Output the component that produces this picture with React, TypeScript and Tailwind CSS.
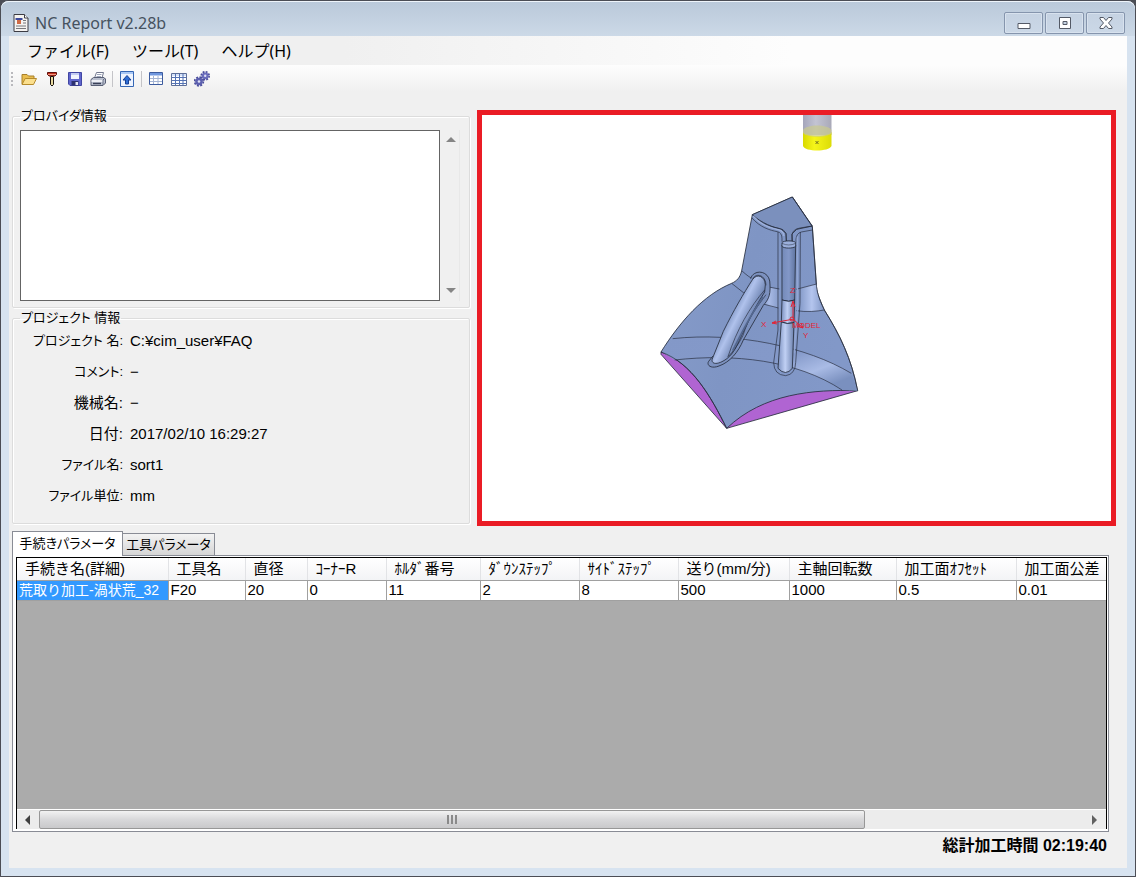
import type { ReactNode } from "react";

const columns = [
  { name: "手続き名(詳細)", value: "荒取り加工-渦状荒_32", width: "w-[151px]" },
  { name: "工具名", value: "F20", width: "w-[77px]" },
  { name: "直径", value: "20", width: "w-[62px]" },
  { name: "ｺｰﾅｰR", value: "0", width: "w-[79px]" },
  { name: "ﾎﾙﾀﾞ番号", value: "11", width: "w-[94px]" },
  { name: "ﾀﾞｳﾝｽﾃｯﾌﾟ", value: "2", width: "w-[99px]" },
  { name: "ｻｲﾄﾞｽﾃｯﾌﾟ", value: "8", width: "w-[99px]" },
  { name: "送り(mm/分)", value: "500", width: "w-[111px]" },
  { name: "主軸回転数", value: "1000", width: "w-[107px]" },
  { name: "加工面ｵﾌｾｯﾄ", value: "0.5", width: "w-[120px]" },
  { name: "加工面公差", value: "0.01", width: "" },
];

const info = [
  { label: "プロジェクト 名:", value: "C:¥cim_user¥FAQ", size: "text-[13px]" },
  { label: "コメント:", value: "−", size: "text-[13px]" },
  { label: "機械名:", value: "−", size: "text-[15px]" },
  { label: "日付:", value: "2017/02/10 16:29:27", size: "text-[15px]" },
  { label: "ファイル名:", value: "sort1", size: "text-[13px]" },
  { label: "ファイル単位:", value: "mm", size: "text-[13px]" },
];

function Icon({ children }: { children: ReactNode }) {
  return (
    <svg width="16" height="16" viewBox="0 0 16 16" aria-hidden="true">
      {children}
    </svg>
  );
}

function AppIcon() {
  return (
    <svg width="16" height="18" viewBox="0 0 16 18" aria-hidden="true">
      <path d="M1 .5h10.500l3.500 3.500v13.500H1z" fill="#f5f3f1" stroke="#3c3c44" />
      <path d="M11.500.500V4H15" fill="#fff" stroke="#3c3c44" />
      <path d="M2.500 4h7v2h-7z" fill="#3d4a9c" />
      <path d="M4 6h4v4H4z" fill="#d06a45" />
      <path d="M10 6.500h3M10 9h3M3 12h10M3 14.500h10" stroke="#77777b" />
    </svg>
  );
}

const FolderIcon = () => (
  <Icon>
    <path d="M1 13V3.500h5L7.500 5H13v3" fill="#e9bd4e" stroke="#a8802a" />
    <path d="M1 13.500 4.200 7.500H15.500L12.500 13.500Z" fill="#fbdf8d" stroke="#b58a2c" />
  </Icon>
);
const DrillIcon = () => (
  <Icon>
    <path d="M3.500 1.500h9v2l-1.500 1.500H5L3.500 3.500z" fill="#c8321f" stroke="#5d0f0a" />
    <path d="M4 3.500h8" stroke="#f09a80" />
    <path d="M6.500 5.500h3v8L8 15l-1.500-1.500z" fill="#e8d9a0" stroke="#16100c" />
  </Icon>
);
const SaveIcon = () => (
  <Icon>
    <path d="M1.500 1.500h13v13H3l-1.500-1.500z" fill="#6066cc" stroke="#4146a3" />
    <path d="M4 2h8v6H4z" fill="#f1f4fd" />
    <path d="M4 2h8v2H4z" fill="#c3ccf2" />
    <path d="M4.500 10h7v4.500h-7z" fill="#2c3170" />
    <path d="M8.500 11h2.500v3H8.500z" fill="#e7e8f5" />
  </Icon>
);
const PrintIcon = () => (
  <Icon>
    <path d="M4.500 7 6.500 1.500h7L12 7z" fill="#fff" stroke="#72788e" />
    <path d="M7 3.500h4.500M6.500 5.500H11" stroke="#9da5ba" />
    <path d="M1 8.500 3.500 6.500H14l1.500 1.500v4L13 14.500H1z" fill="#b9bfce" stroke="#585f75" />
    <path d="M1.500 9H13v2H1.500z" fill="#eef0f6" />
    <path d="M3 12.500h8" stroke="#3a4057" strokeWidth="1.500" />
    <path d="M13 9v5M13 9l2-2" stroke="#6b7288" />
  </Icon>
);
const UpIcon = () => (
  <Icon>
    <path d="M1.500 .500h13v15h-13z" fill="#eef4ff" stroke="#3567b5" />
    <path d="M2 1h12v2H2z" fill="#a9c8f5" />
    <path d="M8 4.500 12 9H9.500v4h-3V9H4z" fill="#2f6fd6" stroke="#163f94" />
  </Icon>
);
const GridIcon = () => (
  <Icon>
    <path d="M1.500 1.500h13v12h-13z" fill="#fff" stroke="#3c5b9e" />
    <path d="M2 2h12v2.500H2z" fill="#6f97de" />
    <path d="M2 7.500h12M2 10.500h12M5.500 5v8M10 5v8" stroke="#a4b4d4" />
  </Icon>
);
const SheetIcon = () => (
  <Icon>
    <path d="M.500 2.500h15v12H.500z" fill="#fff" stroke="#5e6f98" />
    <path d="M1 3h14v2H1z" fill="#d6e2f7" />
    <path d="M1 6.500h14M1 9.500h14M1 12.500h14M4.500 3v11M8.500 3v11M12 3v11" stroke="#5573b4" />
  </Icon>
);
const GearsIcon = () => (
  <Icon>
    <circle cx="5" cy="10.500" r="3.800" fill="#5d60b0" />
    <circle cx="5" cy="10.500" r="4.400" fill="none" stroke="#494c9c" strokeWidth="1.600" strokeDasharray="2 1.450" />
    <circle cx="5" cy="10.500" r="1.300" fill="#dfe1f5" />
    <circle cx="11.200" cy="4.800" r="3.400" fill="#6a6dbd" />
    <circle cx="11.200" cy="4.800" r="4" fill="none" stroke="#494c9c" strokeWidth="1.600" strokeDasharray="1.900 1.240" />
    <circle cx="11.200" cy="4.800" r="1.200" fill="#dfe1f5" />
  </Icon>
);

function ToolButton({ label, children }: { label: string; children: ReactNode }) {
  return (
    <button type="button" aria-label={label} className="flex h-6 w-[23px] items-center justify-center">
      {children}
    </button>
  );
}

function Separator() {
  return (
    <div className="flex w-[6px] justify-center">
      <div className="h-4 w-px bg-[#c4c4c8]" />
    </div>
  );
}

function CaptionButton({ label, children }: { label: string; children: ReactNode }) {
  return (
    <button
      type="button"
      aria-label={label}
      className="flex h-[22px] w-[39px] items-center justify-center rounded-xs border border-[#8595ad] bg-linear-to-b from-[#c5d2e2] to-[#cbd8e7] shadow-[inset_0_0_0_1px_#d8e2ee]"
    >
      {children}
    </button>
  );
}

function ModelView() {
  return (
    <svg
      viewBox="482 115 629 406"
      preserveAspectRatio="xMidYMin meet"
      className="h-full w-full"
      role="img"
      aria-label="MODEL"
    >
      <defs>
        <linearGradient id="holder" x1="0" x2="1" y1="0" y2="0">
          <stop offset="0" stopColor="#a5a6bb" />
          <stop offset=".45" stopColor="#c3c4d3" />
          <stop offset="1" stopColor="#a9a9b8" />
        </linearGradient>
        <linearGradient id="cutter" x1="0" x2="1" y1="0" y2="0">
          <stop offset="0" stopColor="#d9d900" />
          <stop offset=".4" stopColor="#f5f51a" />
          <stop offset="1" stopColor="#dcdc08" />
        </linearGradient>
        <linearGradient id="body" x1="0" x2="1" y1="0" y2="0.3">
          <stop offset="0" stopColor="#879cca" />
          <stop offset=".5" stopColor="#7f95c4" />
          <stop offset="1" stopColor="#8298c8" />
        </linearGradient>
        <linearGradient id="rod" x1="0" x2="1" y1="0" y2="0">
          <stop offset="0" stopColor="#7389b8" />
          <stop offset=".5" stopColor="#8398c8" />
          <stop offset="1" stopColor="#5f749f" />
        </linearGradient>
        <linearGradient id="rodLight" x1="0" x2="1" y1="0" y2="0">
          <stop offset="0" stopColor="#7b90bf" />
          <stop offset=".45" stopColor="#c0d0f4" />
          <stop offset="1" stopColor="#6c81ae" />
        </linearGradient>
        <linearGradient id="rib" gradientUnits="userSpaceOnUse" x1="262" y1="410" x2="322" y2="440">
          <stop offset="0" stopColor="#7a90bf" />
          <stop offset=".4" stopColor="#b0c2ec" />
          <stop offset="1" stopColor="#6c82b0" />
        </linearGradient>
        <linearGradient id="shine" x1="0" x2="1" y1="0" y2="0">
          <stop offset="0" stopColor="#7d93c2" />
          <stop offset=".12" stopColor="#a9bbe6" />
          <stop offset=".3" stopColor="#8096c5" />
          <stop offset=".6" stopColor="#8399c8" />
          <stop offset=".8" stopColor="#b4c5ee" />
          <stop offset="1" stopColor="#7f95c4" />
        </linearGradient>
        <linearGradient id="fillet" x1="0" x2="1" y1="0" y2=".7">
          <stop offset="0" stopColor="#8398c8" />
          <stop offset=".6" stopColor="#8499c9" />
          <stop offset=".82" stopColor="#a9bbe5" />
          <stop offset="1" stopColor="#7a90bf" />
        </linearGradient>
      </defs>

      <path d="M803 115h28.500v20h-28.500z" fill="url(#holder)" />
      <path d="M803 132v14c2 6 26 6 28.500 0v-14c-3 5-25 5-28.500 0z" fill="url(#cutter)" />
      <path d="M803 130c3-6 25-6 28.500 0v3c-3 5-25 5-28.500 0z" fill="#c9c98f" opacity=".7" />
      <path d="m815.500 141 3 3m0-3-3 3" stroke="#5f5f20" strokeWidth=".9" />

      <g transform="translate(640 180) scale(.333333)" stroke="#252c3c" strokeWidth="2.500" fill="none" strokeLinejoin="round">
        <path d="M63 516V523L260 745 653 632 520 560 160 500Z" fill="#b064d2" />
        <path
          d="M457 51 337 104 305 272C300 294 290 303 275 310C190 345 120 425 63 516C155 548 213 650 260 745C370 640 520 628 653 632C634 535 600 465 553 390C535 350 530 335 529 312L517 140Z"
          fill="url(#body)"
        />
        <path d="M98 476C290 455 500 500 634 580L653 632 606 630C470 540 260 515 104 540L66 516Z" fill="url(#fillet)" stroke="none" />
        <path d="M98 476C290 455 500 500 634 580M104 540C280 520 470 540 606 630M63 516C155 548 213 650 260 745" strokeWidth="2" />
        <path d="M457 51 337 104C365 130 400 142 424 148L438 160 439 184H457L456 162 470 148 517 138Z" fill="#7b90bd" />
        <path d="M375 319 418 328 466 328 530 312C532 350 540 375 553 390C500 399 450 392 400 382L365 368Z" fill="url(#shine)" stroke="none" />
        <path d="M468 328 530 312M468 392C500 397 530 394 553 390M375 319 418 327M362 370 415 384M305 272C320 285 330 294 342 298M275 310 318 344" strokeWidth="2" />
        <path d="M457 51 517 140 529 312C530 335 535 350 553 390C600 465 634 535 653 632" strokeWidth="2" />
        <path d="M337 104C360 130 390 140 414 144Q432 146 438 160L439 184M517 138 480 144Q458 148 456 164V184" strokeWidth="2" />
        <path d="M336 114C360 142 390 151 412 155Q426 158 426 176V185M517 150 484 156Q469 160 468 178V188" strokeWidth="2" />
        <path d="M339 108C362 134 392 145 414 149Q430 152 432 168" stroke="#9eb1dc" strokeWidth="4" />
        <path d="M414 156V450L401 548Q402 585 437 587 466 583 467 548L480 370 481 156" strokeWidth="2" />
        <path d="M472 170V390L462 520" stroke="#92a6d3" strokeWidth="4" />
        <path d="M426 195V360Q447 368 464 360L467 195Z" fill="url(#rod)" />
        <path d="M426 360Q447 368 464 360L462 428Q440 434 424 426Z" fill="url(#rodLight)" />
        <path d="M424 426Q440 434 462 428L457 565Q437 590 414 565Z" fill="url(#rodLight)" />
        <path d="M426 188C429 181 464 181 467 188V199C460 206 432 206 426 199Z" fill="#9bafdb" />
        <path d="M426 190Q446 200 467 190" strokeWidth="1.500" />
        <path d="M332 296C340 266 392 269 390 315 392 350 382 362 370 376L310 480C294 518 270 546 237 558 211 568 199 554 206 544L219 528" fill="#7c91bf" />
        <path d="M338 298C350 280 375 288 376 314L374 336C330 405 314 450 289 500 278 522 263 537 246 545 224 556 211 548 218 534L250 454C280 393 311 340 338 298Z" fill="url(#rib)" />
        <path d="M374 330C330 380 290 450 264 530M378 344C345 390 327 410 309 466C298 489 280 515 264 530M338 298C345 278 377 282 378 316" strokeWidth="2" />
        <path d="M370 350C327 410 310 450 278 512" stroke="#53678f" strokeWidth="5" />
      </g>

      <g stroke="#e12436" fill="none" strokeWidth="1">
        <path d="m794 319-22 4m4-2-4 2 5 1M793 318v-16m-2 5 2-6 2 6M793 319l10 9m-6-2 6 2-2-5" />
        <circle cx="792" cy="319" r="2" />
      </g>
      <g fill="#e12436" fontFamily="Liberation Sans, sans-serif" fontSize="8">
        <text x="761" y="327">X</text>
        <text x="790" y="293">Z</text>
        <text x="792" y="328">MODEL</text>
        <text x="803" y="338">Y</text>
      </g>
    </svg>
  );
}

export default function App() {
  return (
    <div className="min-h-screen bg-[#4b4d55] font-['Liberation_Sans','Noto_Sans_CJK_JP',sans-serif] text-[15px] leading-5 text-black">
      <div className="flex min-h-screen flex-col rounded-t-lg border border-[#4b4d55] bg-[#d7e3f0] px-2 pb-2">
        <header className="-mx-2 flex h-[35px] shrink-0 items-center rounded-t-lg border-t border-[#eef4fa] bg-linear-to-b from-[#bac9da] to-[#ccd9e7] pt-2 pr-[10px] pl-3">
          <AppIcon />
          <h1 className="ml-[6px] flex-1 font-['Noto_Sans','Noto_Sans_CJK_JP',sans-serif] text-[16px] text-[#46525f]">NC Report v2.28b</h1>
          <div className="flex gap-[2px]">
            <CaptionButton label="最小化">
              <svg width="14" height="14" viewBox="0 0 14 14"><path d="M1 7.500h12v5H1z" fill="#fff" stroke="#545a66" /></svg>
            </CaptionButton>
            <CaptionButton label="最大化">
              <svg width="14" height="14" viewBox="0 0 14 14"><path d="M1.500 1.500h11v11h-11z" fill="#fff" stroke="#545a66" /><path d="M5 5.500h4v3H5z" fill="#c5d2e2" stroke="#545a66" /></svg>
            </CaptionButton>
            <CaptionButton label="閉じる">
              <svg width="14" height="14" viewBox="0 0 14 14"><path d="m1 1.500h3.500L7 4.500l2.500-3H13v1.500L9.500 7l3.500 4v1.500H9.500L7 9.500l-2.500 3H1V11l3.500-4L1 3z" fill="#fff" stroke="#545a66" /></svg>
            </CaptionButton>
          </div>
        </header>

        <main className="flex flex-1 flex-col bg-[#f0f0f0]">
          <nav className="flex h-[29px] items-center gap-[23px] bg-linear-to-r from-[#f0f0f0] from-30% to-[#fdfdfd] to-70% pl-[18px] font-['Noto_Sans','Noto_Sans_CJK_JP',sans-serif] text-[16px]">
            <button type="button">ファイル(F)</button>
            <button type="button">ツール(T)</button>
            <button type="button">ヘルプ(H)</button>
          </nav>

          <div role="toolbar" className="flex h-[27px] items-center bg-linear-to-b from-[#fdfdfd] to-[#f0f0f0] pl-[2px]">
            <div className="mr-1 h-[14px] border-l-2 border-dotted border-[#b9b9bd]" />
            <ToolButton label="開く"><FolderIcon /></ToolButton>
            <ToolButton label="工具"><DrillIcon /></ToolButton>
            <ToolButton label="保存"><SaveIcon /></ToolButton>
            <ToolButton label="印刷"><PrintIcon /></ToolButton>
            <Separator />
            <ToolButton label="出力"><UpIcon /></ToolButton>
            <Separator />
            <ToolButton label="表"><GridIcon /></ToolButton>
            <ToolButton label="シート"><SheetIcon /></ToolButton>
            <ToolButton label="設定"><GearsIcon /></ToolButton>
          </div>

          <div className="flex gap-[7px] pt-[14px] pr-[11px] pl-[3px]">
            <div className="flex w-[458px] shrink-0 flex-col [font-feature-settings:'palt']">
              <fieldset className="rounded-xs border border-[#dcdcdc] px-[7px] pb-[6px] shadow-[1px_1px_0_#fff,inset_1px_1px_0_#fff]">
                <legend className="h-5 px-px text-[13px]"><label htmlFor="provider">プロバイダ情報</label></legend>
                <div className="flex pt-1">
                  <textarea id="provider" className="block h-[171px] flex-1 resize-none border border-[#646464] bg-white p-1 outline-none" />
                  <div className="mr-[2px] ml-[2px] flex w-[18px] flex-col items-center justify-between border-r border-[#e8e8e8] py-[7px]">
                    <button type="button" aria-label="上へ"><svg width="10" height="6" viewBox="0 0 10 6"><path d="M5 0 10 5H0z" fill="#858585" /></svg></button>
                    <button type="button" aria-label="下へ"><svg width="10" height="6" viewBox="0 0 10 6"><path d="M0 0H10L5 5z" fill="#858585" /></svg></button>
                  </div>
                </div>
              </fieldset>
              <fieldset className="rounded-xs border border-[#dcdcdc] px-[7px] pb-3 shadow-[1px_1px_0_#fff,inset_1px_1px_0_#fff]">
                <legend className="h-5 px-px text-[13px]">プロジェクト 情報</legend>
                <dl className="-mt-[3px] grid auto-rows-[31px] grid-cols-[103px_1fr] items-center gap-x-[7px]">
                  {info.map(({ label, value, size }) => (
                    <div key={label} className="contents">
                      <dt className={`text-right whitespace-nowrap ${size}`}>{label}</dt>
                      <dd>{value}</dd>
                    </div>
                  ))}
                </dl>
              </fieldset>
            </div>
            <section className="mt-1 h-[416px] min-w-0 flex-1 border-[5px] border-[#ea1c25] bg-white">
              <ModelView />
            </section>
          </div>

          <div className="flex flex-1 flex-col pt-[5px] pr-[18px] pl-[3px]">
            <div role="tablist" className="flex items-end text-[13px] [font-feature-settings:'palt']">
              <button type="button" role="tab" aria-selected="true" className="relative -mb-px h-[25px] w-[111px] border border-b-0 border-[#898c95] bg-white text-center whitespace-nowrap">手続きパラメータ</button>
              <button type="button" role="tab" aria-selected="false" className="h-[22px] w-[92px] border border-b-0 border-l-0 border-[#898c95] bg-linear-to-b from-[#f3f3f3] to-[#d6d6d6] text-center whitespace-nowrap">工具パラメータ</button>
            </div>
            <div className="flex flex-1 flex-col border border-[#898c95] bg-white pt-px pr-px pb-[2px] pl-[3px]">
              <div className="flex flex-1 flex-col overflow-hidden border border-b-0 border-black bg-[#ababab]">
                <table className="w-full table-fixed border-collapse bg-white leading-[18px]">
                  <thead>
                    <tr className="h-[22px] bg-linear-to-b from-white to-[#f3f4f6]">
                      {columns.map((c) => (
                        <th key={c.name} scope="col" className={`${c.width} overflow-hidden border-r border-b border-r-[#e2e3e6] border-b-[#a0a0a0] pl-2 text-left font-normal whitespace-nowrap last:border-r-0`}>{c.name}</th>
                      ))}
                    </tr>
                  </thead>
                  <tbody>
                    <tr className="h-5">
                      {columns.map((c) => (
                        <td key={c.name} className="overflow-hidden border-r border-b border-[#a0a0a0] pl-[2px] whitespace-nowrap first:bg-[#3399ff] first:text-[14px] first:text-white last:border-r-0">{c.value}</td>
                      ))}
                    </tr>
                  </tbody>
                </table>
                <div className="mt-auto flex h-5 items-stretch border-t border-white bg-[#ececec]">
                  <button type="button" aria-label="左へ" className="flex w-[22px] items-center justify-center"><svg width="6" height="10" viewBox="0 0 6 10"><path d="M5 0V10L0 5z" fill="#404040" /></svg></button>
                  <div className="flex flex-[79] items-center justify-center gap-[2px] rounded-xs border border-[#979797] bg-linear-to-b from-[#f2f2f2] via-[#d8d8da] via-50% to-[#c9c9cb]">
                    <span className="h-[9px] w-[2px] bg-[#8a8a8a]" />
                    <span className="h-[9px] w-[2px] bg-[#8a8a8a]" />
                    <span className="h-[9px] w-[2px] bg-[#8a8a8a]" />
                  </div>
                  <div className="flex-[21]" />
                  <button type="button" aria-label="右へ" className="flex w-[22px] items-center justify-center"><svg width="6" height="10" viewBox="0 0 6 10"><path d="M0 0V10L5 5z" fill="#606060" /></svg></button>
                </div>
              </div>
            </div>
          </div>
          <footer className="flex h-[36px] items-start justify-end pt-1 pr-[20px] text-[16px] font-bold">総計加工時間 02:19:40</footer>
        </main>
      </div>
    </div>
  );
}
